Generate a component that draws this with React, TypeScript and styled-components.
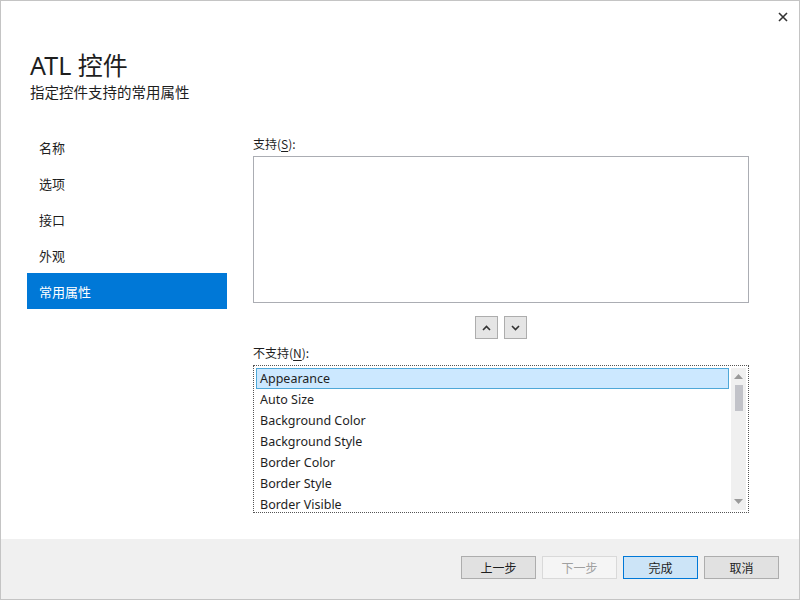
import styled, { createGlobalStyle } from "styled-components";

const Global = createGlobalStyle`
  html, body { margin: 0; padding: 0; background: #fff; }
  body {
    font-family: "Noto Sans", "Noto Sans CJK SC", sans-serif;
    color: #1e1e1e;
  }
`;

const Window = styled.div`
  box-sizing: border-box;
  width: 800px;
  height: 600px;
  border: 1px solid #c4c4c4;
  display: flex;
  flex-direction: column;
  background: #fff;
`;

const Body = styled.div`
  flex: 1;
  position: relative;
  padding: 47px 0 0 29px;
`;

const Close = styled.button`
  position: absolute;
  top: 8px;
  right: 8px;
  width: 16px;
  height: 16px;
  padding: 0;
  border: none;
  background: none;
  display: flex;
  align-items: center;
  justify-content: center;
`;

const Title = styled.h1`
  margin: 0;
  font-family: "Noto Sans", "Noto Sans CJK SC", sans-serif;
  font-weight: 400;
  font-size: 25px;
  line-height: 34px;
  height: 33px;
  color: #1e1e1e;
`;

const Subtitle = styled.div`
  font-family: "Noto Sans CJK SC", sans-serif;
  font-size: 14.5px;
  line-height: 21px;
`;

const Columns = styled.div`
  display: flex;
  margin-top: 27px;
  margin-left: -3px;
`;

const Nav = styled.ul`
  list-style: none;
  margin: 0;
  padding: 0;
  width: 200px;
`;

const NavItem = styled.li<{ $active?: boolean }>`
  height: 36px;
  display: flex;
  align-items: center;
  padding-left: 12px;
  font-family: "Noto Sans CJK SC", sans-serif;
  font-size: 13px;
  background: ${(p) => (p.$active ? "#0078d7" : "transparent")};
  color: ${(p) => (p.$active ? "#fff" : "#1e1e1e")};
`;

const Content = styled.div`
  margin: 11px 0 0 26px;
  width: 496px;
  display: flex;
  flex-direction: column;
`;

const Label = styled.div`
  font-family: "Noto Sans CJK SC", sans-serif;
  font-size: 12px;
  line-height: 16px;
  height: 20px;
  margin-top: -4px;
  u { text-underline-offset: 2px; }
`;

const Box = styled.div`
  box-sizing: border-box;
  height: 147px;
  border: 1px solid #abadb3;
  background: #fff;
`;

const Movers = styled.div`
  display: flex;
  justify-content: center;
  gap: 6px;
  margin: 13px 0 10px 0;
`;

const SmallButton = styled.button`
  box-sizing: border-box;
  width: 23px;
  height: 23px;
  padding: 0;
  border: 1px solid #adadad;
  background: #e5e5e5;
  display: flex;
  align-items: center;
  justify-content: center;
`;

const List = styled.div`
  box-sizing: border-box;
  height: 148px;
  border: 1px dotted #555;
  display: flex;
  padding: 2px;
  overflow: hidden;
`;

const Items = styled.div`
  flex: 1;
  display: flex;
  flex-direction: column;
`;

const Item = styled.div<{ $selected?: boolean }>`
  box-sizing: border-box;
  height: 21px;
  flex: none;
  display: flex;
  align-items: center;
  padding-left: 3px;
  font-family: "Noto Sans", sans-serif;
  font-size: 12.5px;
  color: #1e1e1e;
  background: ${(p) => (p.$selected ? "#cce8ff" : "transparent")};
  border: 1px solid ${(p) => (p.$selected ? "#4fa8d8" : "transparent")};
`;

const Scrollbar = styled.div`
  width: 15px;
  margin-left: 2px;
  background: #f0f0f0;
  display: flex;
  flex-direction: column;
  align-items: center;
`;

const Arrow = styled.div`
  height: 17px;
  display: flex;
  align-items: center;
  justify-content: center;
`;

const Thumb = styled.div`
  width: 8px;
  height: 26px;
  background: #c2c3c9;
`;

const Track = styled.div`
  flex: 1;
`;

const Footer = styled.div`
  height: 60px;
  background: #f0f0f0;
  display: flex;
  justify-content: flex-end;
  align-items: flex-start;
  padding: 17px 20px 0 0;
  box-sizing: border-box;
  gap: 6px;
`;

const Button = styled.button<{ $primary?: boolean }>`
  box-sizing: border-box;
  width: 75px;
  height: 23px;
  padding: 0;
  font-family: "Noto Sans CJK SC", sans-serif;
  font-size: 12px;
  color: ${(p) => (p.disabled ? "#a0a0a0" : "#1e1e1e")};
  background: ${(p) => (p.$primary ? "#cce4f7" : p.disabled ? "#f5f5f5" : "#e1e1e1")};
  border: 1px solid ${(p) => (p.$primary ? "#0078d7" : p.disabled ? "#d9d9d9" : "#adadad")};
`;

const items = [
  "Appearance",
  "Auto Size",
  "Background Color",
  "Background Style",
  "Border Color",
  "Border Style",
  "Border Visible",
];

const nav = ["名称", "选项", "接口", "外观", "常用属性"];

export default function App() {
  return (
    <>
      <Global />
      <Window>
        <Body>
          <Close aria-label="关闭">
            <svg width="10" height="10" viewBox="0 0 10 10">
              <path d="M1 1L9 9M9 1L1 9" stroke="#333" strokeWidth="1.6" />
            </svg>
          </Close>
          <Title>ATL 控件</Title>
          <Subtitle>指定控件支持的常用属性</Subtitle>
          <Columns>
            <Nav>
              {nav.map((n) => (
                <NavItem key={n} $active={n === "常用属性"}>
                  {n}
                </NavItem>
              ))}
            </Nav>
            <Content>
              <Label>
                支持(<u>S</u>):
              </Label>
              <Box />
              <Movers>
                <SmallButton aria-label="上移">
                  <svg width="9" height="6" viewBox="0 0 9 6">
                    <path d="M1 5L4.5 1.5L8 5" fill="none" stroke="#333" strokeWidth="1.6" />
                  </svg>
                </SmallButton>
                <SmallButton aria-label="下移">
                  <svg width="9" height="6" viewBox="0 0 9 6">
                    <path d="M1 1L4.5 4.5L8 1" fill="none" stroke="#333" strokeWidth="1.6" />
                  </svg>
                </SmallButton>
              </Movers>
              <Label>
                不支持(<u>N</u>):
              </Label>
              <List>
                <Items>
                  {items.map((it, i) => (
                    <Item key={it} $selected={i === 0}>
                      {it}
                    </Item>
                  ))}
                </Items>
                <Scrollbar>
                  <Arrow>
                    <svg width="9" height="5" viewBox="0 0 9 5">
                      <path d="M0 5L4.5 0L9 5Z" fill="#9a9a9a" />
                    </svg>
                  </Arrow>
                  <Thumb />
                  <Track />
                  <Arrow>
                    <svg width="9" height="5" viewBox="0 0 9 5">
                      <path d="M0 0L4.5 5L9 0Z" fill="#9a9a9a" />
                    </svg>
                  </Arrow>
                </Scrollbar>
              </List>
            </Content>
          </Columns>
        </Body>
        <Footer>
          <Button>上一步</Button>
          <Button disabled>下一步</Button>
          <Button $primary>完成</Button>
          <Button>取消</Button>
        </Footer>
      </Window>
    </>
  );
}
